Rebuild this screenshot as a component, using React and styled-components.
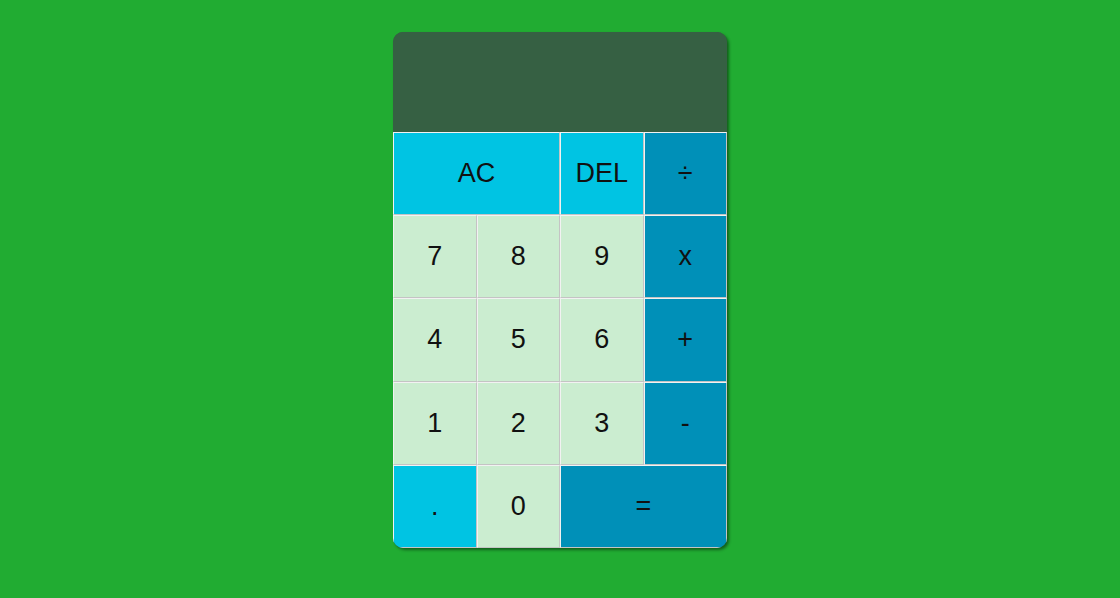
import React from "react";
import styled, { createGlobalStyle } from "styled-components";

const Global = createGlobalStyle`
  html, body { margin: 0; padding: 0; background: #21ac32; }
  body { font-family: "Liberation Sans", Arial, sans-serif; }
`;

const Page = styled.div`
  display: flex;
  justify-content: center;
  padding-top: 32px;
  min-height: 598px;
  box-sizing: border-box;
`;

const Calculator = styled.div`
  width: 334px;
  border-radius: 10px;
  overflow: hidden;
  box-shadow: 2px 2px 3px rgba(0, 0, 0, 0.45);
  background: #366043;
  align-self: flex-start;
`;

const Display = styled.div`
  height: 100px;
  background: #366043;
  color: #fff;
  display: flex;
  align-items: flex-end;
  justify-content: flex-end;
  padding: 10px;
  box-sizing: border-box;
  font-size: 32px;
`;

const Grid = styled.div`
  display: grid;
  grid-template-columns: repeat(4, 1fr);
  grid-template-rows: repeat(5, 1fr);
  height: 416px;
`;

const colors = {
  num: "#cbedd0",
  fn: "#00c4e3",
  op: "#0090b8",
};

const Key = styled.button`
  grid-column: span ${(p) => p.$span || 1};
  background: ${(p) => colors[p.$kind]};
  border: 1px solid;
  border-color: #f2f2f2 #c4c4c4 #c4c4c4 #f2f2f2;
  font-family: "Liberation Sans", Arial, sans-serif;
  font-size: 27px;
  color: #111;
  padding: 0;
  cursor: pointer;
  outline: none;
`;

const keys = [
  ["AC", "fn", 2],
  ["DEL", "fn"],
  ["÷", "op"],
  ["7", "num"],
  ["8", "num"],
  ["9", "num"],
  ["x", "op"],
  ["4", "num"],
  ["5", "num"],
  ["6", "num"],
  ["+", "op"],
  ["1", "num"],
  ["2", "num"],
  ["3", "num"],
  ["-", "op"],
  [".", "fn"],
  ["0", "num"],
  ["=", "op", 2],
];

export default function App() {
  return (
    <>
      <Global />
      <Page>
        <Calculator>
          <Display />
          <Grid>
            {keys.map(([label, kind, span]) => (
              <Key key={label} $kind={kind} $span={span}>
                {label}
              </Key>
            ))}
          </Grid>
        </Calculator>
      </Page>
    </>
  );
}
